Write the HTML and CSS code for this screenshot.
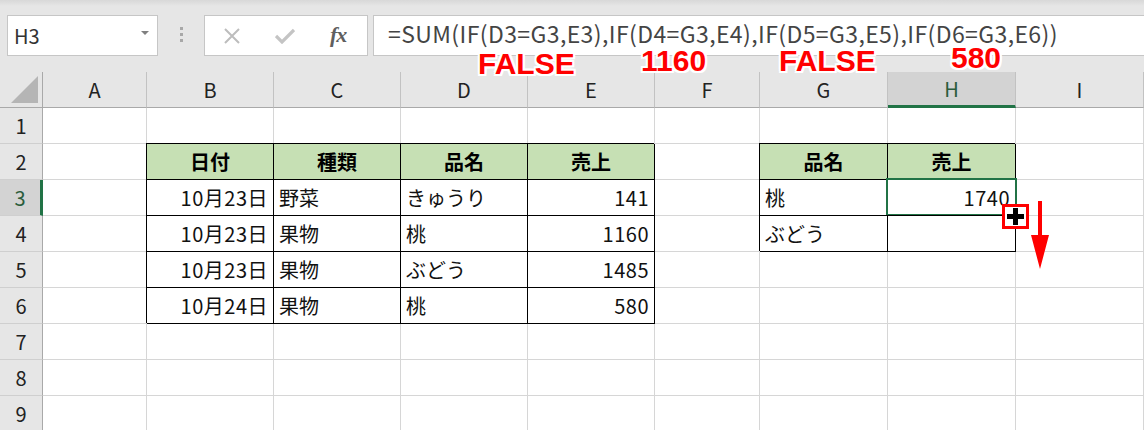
FILE: index.html
```html
<!DOCTYPE html>
<html lang="ja">
<head>
  <meta charset="UTF-8">
  <title>SUM IF</title>
  <link rel="stylesheet" href="styles.css">
</head>
<body>
  <div class="window">
    <!-- Строка формул -->
    <div class="formula-bar">
      <div class="name-box">
        <span>H3</span>
        <span class="caret"></span>
      </div>
      <div class="grip"><i></i><i></i><i></i></div>
      <div class="fx-buttons">
        <svg width="18" height="16" viewBox="0 0 18 16"><path d="M2 1 L16 15 M16 1 L2 15" stroke="#bdbdbd" stroke-width="2" fill="none"/></svg>
        <svg width="20" height="16" viewBox="0 0 20 16"><path d="M1 8 L7 14 L19 2" stroke="#c4c4c4" stroke-width="3.2" fill="none"/></svg>
        <span class="fx">fx</span>
      </div>
      <div class="formula">=SUM(IF(D3=G3,E3),IF(D4=G3,E4),IF(D5=G3,E5),IF(D6=G3,E6))</div>
    </div>

    <!-- Лист -->
    <div class="sheet">
      <div class="corner"><span></span></div>
      <div class="col">A</div>
      <div class="col">B</div>
      <div class="col">C</div>
      <div class="col">D</div>
      <div class="col">E</div>
      <div class="col">F</div>
      <div class="col">G</div>
      <div class="col active">H</div>
      <div class="col">I</div>

      <div class="row">1</div>
      <div class="cell"></div><div class="cell"></div><div class="cell"></div><div class="cell"></div><div class="cell"></div><div class="cell"></div><div class="cell"></div><div class="cell"></div><div class="cell"></div>

      <div class="row">2</div>
      <div class="cell"></div>
      <div class="cell t th">日付</div>
      <div class="cell t th">種類</div>
      <div class="cell t th">品名</div>
      <div class="cell t th">売上</div>
      <div class="cell"></div>
      <div class="cell t th">品名</div>
      <div class="cell t th">売上</div>
      <div class="cell"></div>

      <div class="row active">3</div>
      <div class="cell"></div>
      <div class="cell t num">10月23日</div>
      <div class="cell t">野菜</div>
      <div class="cell t">きゅうり</div>
      <div class="cell t num">141</div>
      <div class="cell"></div>
      <div class="cell t">桃</div>
      <div class="cell t num sel">1740
        <span class="handle"><span class="plus"></span></span>
        <svg class="arrow" width="20" height="68" viewBox="0 0 20 68"><path d="M8 0 H12 V34 H19 L10 68 L1 34 H8 Z" fill="#ff0000"/></svg>
      </div>
      <div class="cell"></div>

      <div class="row">4</div>
      <div class="cell"></div>
      <div class="cell t num">10月23日</div>
      <div class="cell t">果物</div>
      <div class="cell t">桃</div>
      <div class="cell t num">1160</div>
      <div class="cell"></div>
      <div class="cell t">ぶどう</div>
      <div class="cell t"></div>
      <div class="cell"></div>

      <div class="row">5</div>
      <div class="cell"></div>
      <div class="cell t num">10月23日</div>
      <div class="cell t">果物</div>
      <div class="cell t">ぶどう</div>
      <div class="cell t num">1485</div>
      <div class="cell"></div><div class="cell"></div><div class="cell"></div><div class="cell"></div>

      <div class="row">6</div>
      <div class="cell"></div>
      <div class="cell t num">10月24日</div>
      <div class="cell t">果物</div>
      <div class="cell t">桃</div>
      <div class="cell t num">580</div>
      <div class="cell"></div><div class="cell"></div><div class="cell"></div><div class="cell"></div>

      <div class="row">7</div>
      <div class="cell"></div><div class="cell"></div><div class="cell"></div><div class="cell"></div><div class="cell"></div><div class="cell"></div><div class="cell"></div><div class="cell"></div><div class="cell"></div>

      <div class="row">8</div>
      <div class="cell"></div><div class="cell"></div><div class="cell"></div><div class="cell"></div><div class="cell"></div><div class="cell"></div><div class="cell"></div><div class="cell"></div><div class="cell"></div>

      <div class="row">9</div>
      <div class="cell"></div><div class="cell"></div><div class="cell"></div><div class="cell"></div><div class="cell"></div><div class="cell"></div><div class="cell"></div><div class="cell"></div><div class="cell"></div>
    </div>

    <!-- Подписи с результатами IF -->
    <div class="note n1">FALSE</div>
    <div class="note n2">1160</div>
    <div class="note n3">FALSE</div>
    <div class="note n4">580</div>
  </div>
</body>
</html>
```

FILE: styles.css
```css
/* Общие стили */
body {
  margin: 0;
  font-family: "Noto Sans CJK JP", "Noto Sans", sans-serif;
  color: #1a1a1a;
}

.window {
  position: relative;
  width: 1144px;
  height: 430px;
  overflow: hidden;
  background: #e6e6e6;
}

/* Строка формул */
.formula-bar {
  height: 72px;
  display: flex;
  align-items: flex-start;
  padding: 15px 0 0 7px;
  box-sizing: border-box;
  background: linear-gradient(#d8d8d8, #e6e6e6 6px);
}

.name-box {
  width: 151px;
  height: 41px;
  box-sizing: border-box;
  background: #fff;
  border: 1px solid #c6c6c6;
  display: flex;
  align-items: center;
  justify-content: space-between;
  padding: 0 8px 0 6px;
  font-size: 20px;
  color: #333;
}

.caret {
  width: 0;
  height: 0;
  border-left: 4px solid transparent;
  border-right: 4px solid transparent;
  border-top: 4px solid #808080;
  margin-bottom: 6px;
}

.grip {
  width: 46px;
  display: flex;
  flex-direction: column;
  align-items: center;
  gap: 3px;
  padding-top: 12px;
}

.grip i {
  width: 3px;
  height: 3px;
  background: #a8a8a8;
}

.fx-buttons {
  width: 164px;
  height: 41px;
  box-sizing: border-box;
  background: #fff;
  border: 1px solid #c6c6c6;
  display: flex;
  align-items: center;
  padding: 0 0 0 18px;
  gap: 34px;
}

.fx {
  font-family: "Liberation Serif", serif;
  font-style: italic;
  font-weight: bold;
  font-size: 22px;
  color: #5f5f5f;
  letter-spacing: -1px;
  margin-left: 1px;
  margin-bottom: 2px;
}

.formula {
  flex: 1;
  height: 41px;
  margin-left: 5px;
  box-sizing: border-box;
  background: #fff;
  border: 1px solid #c6c6c6;
  border-right: none;
  padding: 0 0 0 14px;
  font-size: 23px;
  line-height: 34px;
  letter-spacing: 0.4px;
  color: #444;
  white-space: nowrap;
}

/* Сетка листа */
.sheet {
  display: grid;
  grid-template-columns: 43px 104px 127px 127px 127px 127px 105px 128px 128px 1fr;
  grid-auto-rows: 36px;
  background: #fff;
}

.sheet > div {
  box-sizing: border-box;
  font-size: 20px;
  display: flex;
  align-items: center;
  white-space: nowrap;
  position: relative;
}

.corner {
  background: #e6e6e6;
  border-right: 1px solid #a9a9a9;
  border-bottom: 1px solid #a9a9a9;
}

.corner span {
  position: absolute;
  right: 4px;
  bottom: 4px;
  width: 0;
  height: 0;
  border-left: 27px solid transparent;
  border-bottom: 27px solid #b5b5b5;
}

.col {
  background: #e6e6e6;
  border-right: 1px solid #c2c2c2;
  border-bottom: 1px solid #a9a9a9;
  justify-content: center;
  color: #222;
}

.col.active {
  background: #d3d3d3;
  border-bottom: 3px solid #217346;
  color: #2b5d3c;
}

.row {
  background: #e6e6e6;
  border-right: 1px solid #a9a9a9;
  border-bottom: 1px solid #cfcfcf;
  justify-content: center;
  color: #222;
}

.row.active {
  background: #d3d3d3;
  border-right: 3px solid #217346;
  color: #2b5d3c;
}

.cell {
  border-right: 1px solid #d6d6d6;
  border-bottom: 1px solid #d6d6d6;
  padding: 0 5px;
  color: #111;
}

/* Ячейки таблиц с рамкой */
.cell.t {
  border-right-color: #000;
  border-bottom-color: #000;
  box-shadow: -1px -1px 0 #000;
}

.cell.th {
  background: #c6e0b4;
  font-weight: bold;
  justify-content: center;
  color: #000;
}

.cell.num {
  justify-content: flex-end;
  letter-spacing: 0.5px;
}

/* Выделенная ячейка H3 */
.cell.sel::after {
  content: "";
  position: absolute;
  left: -2px;
  top: -2px;
  right: -2px;
  bottom: -1px;
  border: 2px solid #217346;
}

.handle {
  position: absolute;
  left: 114px;
  top: 24px;
  width: 27px;
  height: 25px;
  box-sizing: border-box;
  border: 3px solid #ff0000;
  background: #fff;
  z-index: 2;
}

.plus::before,
.plus::after {
  content: "";
  position: absolute;
  background: #000;
}

.plus::before {
  left: 2px;
  right: 2px;
  top: 7px;
  height: 5px;
}

.plus::after {
  left: 8px;
  width: 5px;
  top: 1px;
  bottom: 1px;
}

.arrow {
  position: absolute;
  left: 142px;
  top: 21px;
  z-index: 2;
}

/* Красные подписи */
.note {
  position: absolute;
  font-family: "Liberation Sans", Arial, sans-serif;
  font-weight: bold;
  font-size: 30px;
  line-height: 30px;
  color: #ff0000;
  text-shadow:
    2px 0 0 #fff, -2px 0 0 #fff, 0 2px 0 #fff, 0 -2px 0 #fff,
    2px 2px 0 #fff, -2px -2px 0 #fff, 2px -2px 0 #fff, -2px 2px 0 #fff;
  z-index: 3;
}

.n1 { left: 478px; top: 49px; }
.n2 { left: 641px; top: 46px; }
.n3 { left: 779px; top: 46px; }
.n4 { left: 951px; top: 43px; }
```
